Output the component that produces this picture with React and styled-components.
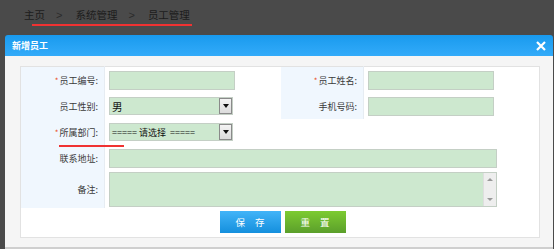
import styled, { createGlobalStyle } from "styled-components";

const GlobalStyle = createGlobalStyle`
  html, body {
    margin: 0;
    padding: 0;
    background: #4a4a4a;
  }
  body {
    width: 554px;
    height: 249px;
    overflow: hidden;
    font-family: "Noto Sans CJK SC", "Liberation Sans", sans-serif;
  }
`;

const crumbs = ["主页", "系统管理", "员工管理"];

//弹窗表单
function App() {
  return (
    <>
      <GlobalStyle />
      <Page>
        <Breadcrumb>
          {crumbs.map((c, i) => (
            <Crumb key={c}>
              {i > 0 && <Sep>&gt;</Sep>}
              {c}
            </Crumb>
          ))}
          <Mark left="32px" top="24px" width="160px" />
        </Breadcrumb>

        <Dialog>
          <TitleBar>
            <Title>新增员工</Title>
            <Close>
              <svg width="10" height="10" viewBox="0 0 10 10">
                <path d="M1 1 L9 9 M9 1 L1 9" stroke="#fff" strokeWidth="2.2" />
              </svg>
            </Close>
          </TitleBar>

          <DialogBody>
            <FormTable>
              <colgroup>
                <col style={{ width: 84 }} />
                <col style={{ width: 176 }} />
                <col style={{ width: 83 }} />
                <col style={{ width: 176 }} />
              </colgroup>
              <tbody>
                <Row height="27px">
                  <Label>
                    <Star>*</Star>员工编号:
                  </Label>
                  <Cell>
                    <Input width="126px" />
                  </Cell>
                  <Label>
                    <Star>*</Star>员工姓名:
                  </Label>
                  <Cell>
                    <Input width="126px" />
                  </Cell>
                </Row>
                <Row height="25px">
                  <Label>员工性别:</Label>
                  <Cell>
                    <Select>
                      <SelectText size="10.5px">男</SelectText>
                      <SelectArrow />
                    </Select>
                  </Cell>
                  <Label>手机号码:</Label>
                  <Cell>
                    <Input width="126px" />
                  </Cell>
                </Row>
                <Row height="27px">
                  <Label>
                    <LabelText>
                      <Star>*</Star>所属部门:
                      <Mark left="4px" top="19px" width="65px" />
                    </LabelText>
                  </Label>
                  <Cell>
                    <Select>
                      <SelectText size="9px">=====&nbsp;请选择&nbsp;&nbsp;=====</SelectText>
                      <SelectArrow />
                    </Select>
                  </Cell>
                  <Blank colSpan={2} />
                </Row>
                <Row height="25px">
                  <Label>联系地址:</Label>
                  <Cell colSpan={3}>
                    <Input width="388px" />
                  </Cell>
                </Row>
                <Row height="37px">
                  <Label>备注:</Label>
                  <Cell colSpan={3}>
                    <TextArea>
                      <ScrollBar>
                        <Tri up />
                        <Tri />
                      </ScrollBar>
                    </TextArea>
                  </Cell>
                </Row>
                <Row height="30px">
                  <Blank />
                  <Blank colSpan={3}>
                    <Buttons>
                      <Button color="blue">保 存</Button>
                      <Button color="green">重 置</Button>
                    </Buttons>
                  </Blank>
                </Row>
              </tbody>
            </FormTable>
          </DialogBody>
        </Dialog>
      </Page>
    </>
  );
}

const Page = styled.div`
  display: flex;
  flex-direction: column;
`;

const Breadcrumb = styled.div`
  position: relative;
  height: 35px;
  padding: 6px 0 0 24px;
  box-sizing: border-box;
  display: flex;
  align-items: flex-start;
  font-size: 10.5px;
  color: #1c1c1c;
`;

const Crumb = styled.span`
  display: flex;
  align-items: center;
  line-height: 18px;
`;

const Sep = styled.span`
  color: #2a2a2a;
  margin: 0 13px 0 11px;
  font-family: "Liberation Sans", sans-serif;
  font-size: 11px;
`;

const Mark = styled.span`
  position: absolute;
  left: ${(p) => p.left};
  top: ${(p) => p.top};
  width: ${(p) => p.width};
  height: 2px;
  background: #f03232;
`;

const Dialog = styled.div`
  margin-left: 5px;
  width: 548px;
  border-radius: 3px 3px 0 0;
  overflow: hidden;
  border-bottom: 3px solid #cfcfcf;
`;

const TitleBar = styled.div`
  height: 21px;
  background: linear-gradient(#199aee, #33abf9);
  display: flex;
  align-items: center;
  justify-content: space-between;
  padding: 0 7px;
`;

const Title = styled.span`
  color: #fff;
  font-weight: bold;
  font-size: 9px;
`;

const Close = styled.span`
  display: flex;
  margin-top: 1px;
`;

const DialogBody = styled.div`
  background: #f5f5f5;
  padding: 10px 14px 9px 15px;
`;

const FormTable = styled.table`
  width: 519px;
  border-collapse: collapse;
  table-layout: fixed;
  background: #fff;
  border: 1px solid #e2e2e2;
  font-size: 9px;
`;

const Row = styled.tr`
  height: ${(p) => p.height};
  & + & > td {
    border-top: 1px solid #eaeaea;
  }
`;

const Label = styled.td`
  background: #f0f7fe;
  text-align: right;
  padding: 0 6px 0 0;
  color: #3a3a3a;
  white-space: nowrap;
  border-right: 1px solid #e6ecf2;
`;

const LabelText = styled.span`
  position: relative;
  display: inline-block;
`;

const Star = styled.span`
  color: #e8501e;
  font-size: 8px;
  margin-right: 1px;
`;

const Cell = styled.td`
  padding: 0 0 0 4px;
  vertical-align: middle;
`;

const Blank = styled.td`
  padding: 0;
`;

const Input = styled.div`
  width: ${(p) => p.width};
  height: 19px;
  box-sizing: border-box;
  background: #cde8cf;
  border: 1px solid #c4cfc5;
`;

const Select = styled.div`
  width: 124px;
  height: 18px;
  box-sizing: border-box;
  background: #cde8cf;
  border: 1px solid #c4cfc5;
  display: flex;
  align-items: flex-end;
`;

const SelectText = styled.span`
  flex: 1;
  font-size: ${(p) => p.size};
  color: #111;
  padding-left: 2px;
  line-height: 14px;
  white-space: nowrap;
`;

const SelectArrow = styled.span`
  width: 13px;
  height: 16px;
  box-sizing: border-box;
  align-self: stretch;
  background: linear-gradient(#f4f4f4, #dcdcdc);
  border: 1px solid #8a8a8a;
  display: flex;
  align-items: center;
  justify-content: center;
  &::after {
    content: "";
    border-left: 3px solid transparent;
    border-right: 3px solid transparent;
    border-top: 4px solid #111;
  }
`;

const TextArea = styled.div`
  width: 388px;
  height: 35px;
  box-sizing: border-box;
  background: #cde8cf;
  border: 1px solid #c4cfc5;
  display: flex;
  justify-content: flex-end;
`;

const ScrollBar = styled.div`
  width: 12px;
  background: #eeeeee;
  border-left: 1px solid #dedede;
  display: flex;
  flex-direction: column;
  justify-content: space-between;
  align-items: center;
  padding: 5px 0;
`;

const Tri = styled.span`
  border-left: 3px solid transparent;
  border-right: 3px solid transparent;
  ${(p) =>
    p.up
      ? "border-bottom: 3px solid #999;"
      : "border-top: 3px solid #999;"}
`;

const Buttons = styled.div`
  display: flex;
  gap: 4px;
  padding-left: 115px;
`;

const Button = styled.button`
  width: 61px;
  height: 22px;
  border: none;
  padding: 0 0 0 4px;
  color: #fff;
  font-size: 9.5px;
  font-family: inherit;
  letter-spacing: 4px;
  background: ${(p) =>
    p.color === "blue"
      ? "linear-gradient(#42b4f8, #148fdd)"
      : "linear-gradient(#7dcb31, #5b9f2b)"};
`;

export default App;
